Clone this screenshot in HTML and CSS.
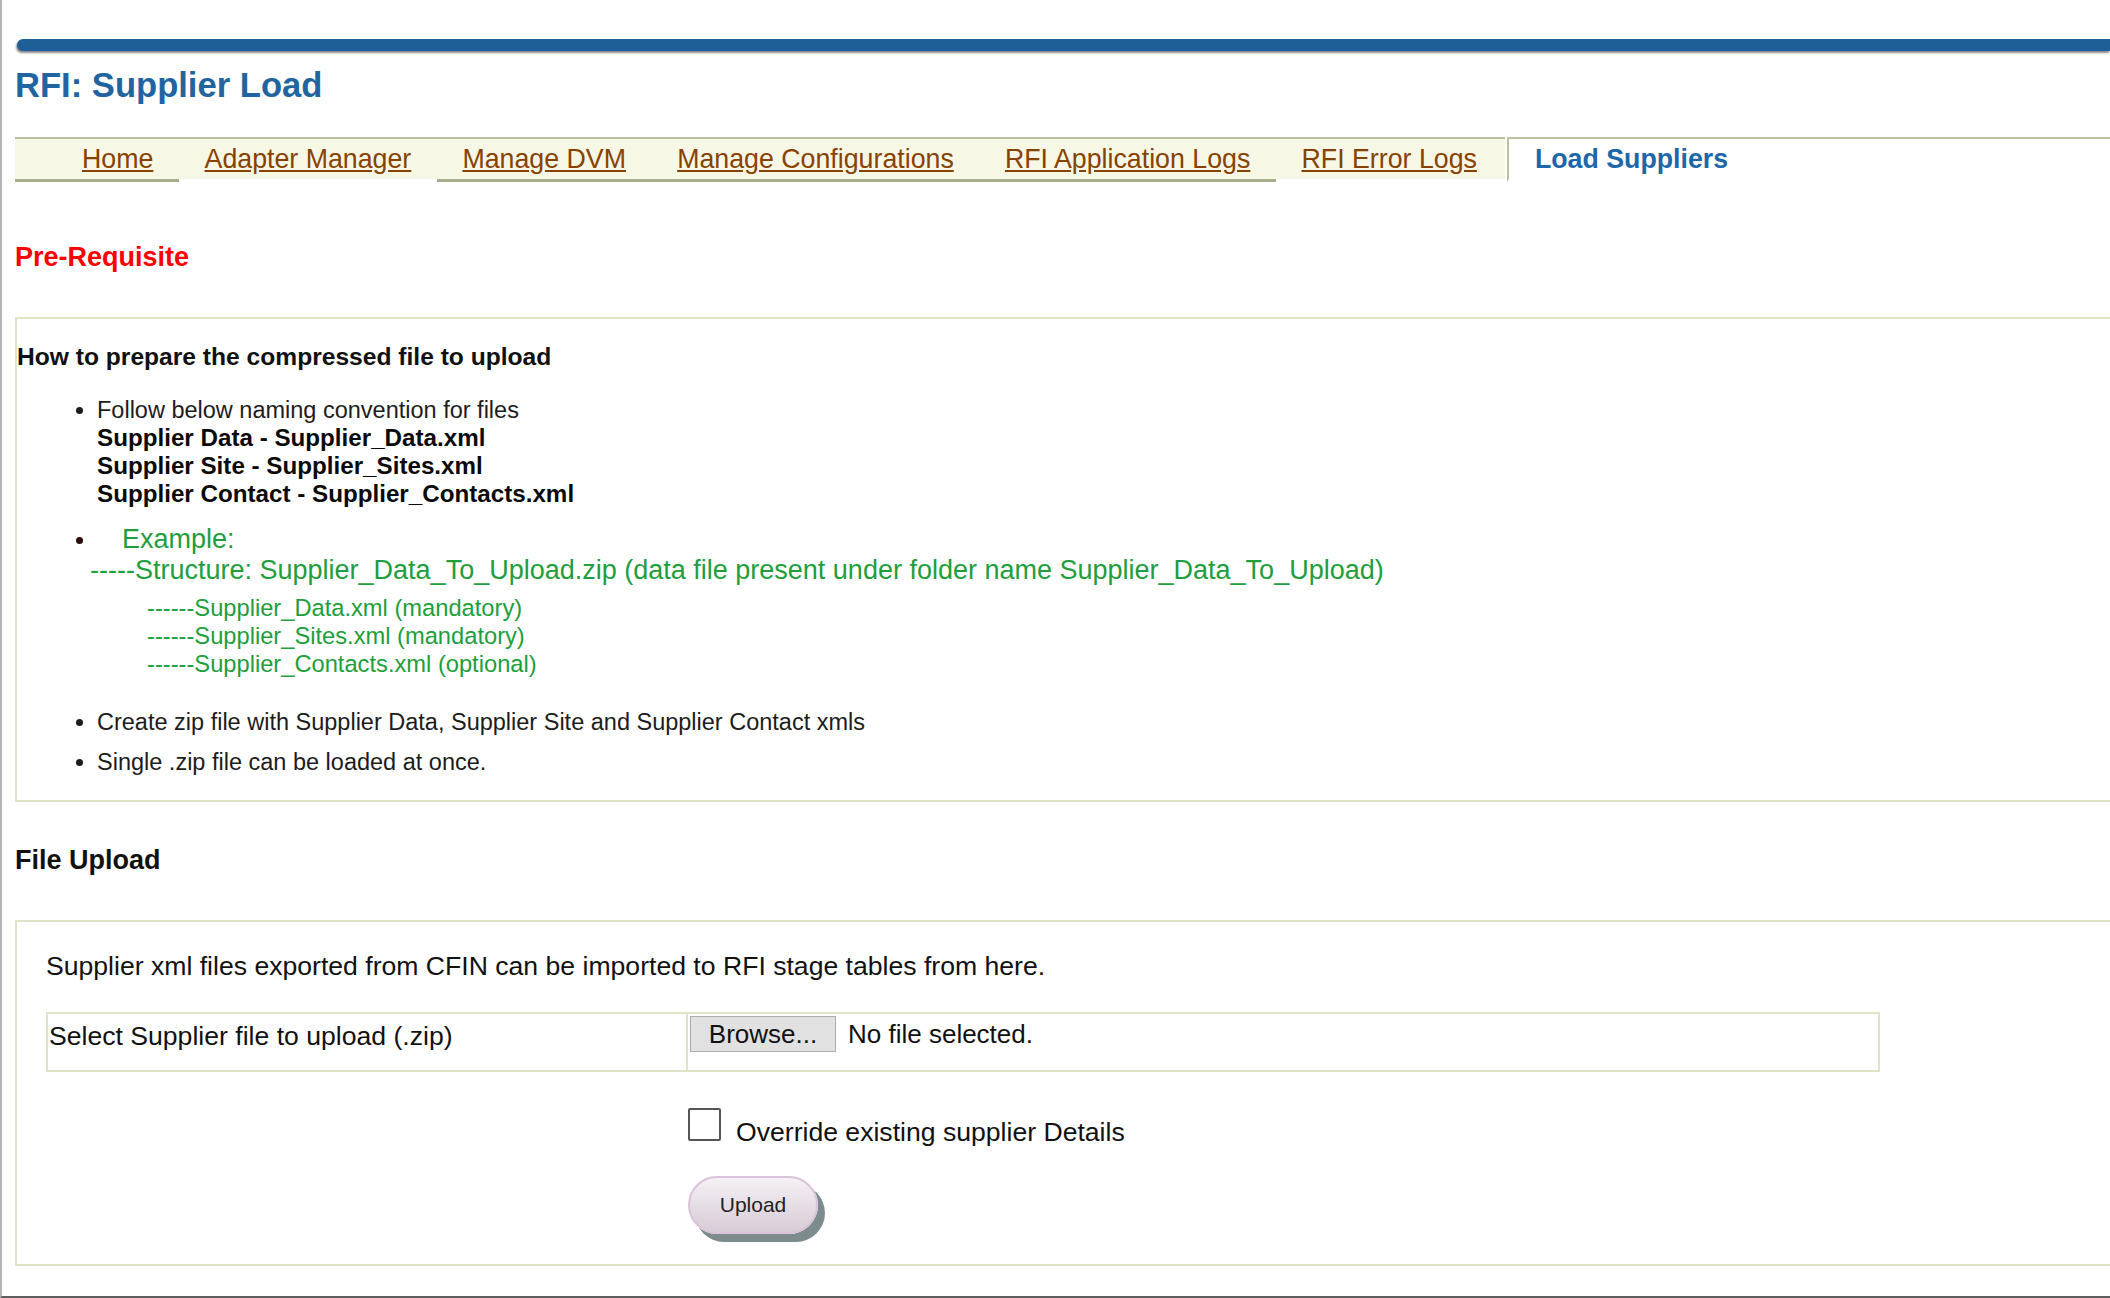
FILE: index.html
```html
<!DOCTYPE html>
<html lang="en">
<head>
    <meta charset="UTF-8">
    <title>RFI: Supplier Load</title>
    <link rel="stylesheet" href="styles.css">
</head>
<body>
<div class="page">

    <div class="topbar"></div>
    <h1 class="title">RFI: Supplier Load</h1>

    <div class="tabs">
        <a class="tab tab-first line" href="#">Home</a>
        <a class="tab" href="#">Adapter Manager</a>
        <a class="tab line" href="#">Manage DVM</a>
        <a class="tab line" href="#">Manage Configurations</a>
        <a class="tab line" href="#">RFI Application Logs</a>
        <a class="tab tab-last" href="#">RFI Error Logs</a>
        <span class="tab-active">Load Suppliers</span>
    </div>

    <h2 class="prereq">Pre-Requisite</h2>

    <div class="box info-box">
        <h3 class="info-head">How to prepare the compressed file to upload</h3>
        <ul class="steps">
            <li>
                Follow below naming convention for files<br>
                <b>Supplier Data - Supplier_Data.xml</b><br>
                <b>Supplier Site - Supplier_Sites.xml</b><br>
                <b>Supplier Contact - Supplier_Contacts.xml</b>
            </li>
            <li class="example">
                <span class="green example-label">Example:</span>
                <div class="green structure">-----Structure: Supplier_Data_To_Upload.zip (data file present under folder name Supplier_Data_To_Upload)</div>
                <div class="green files">
                    ------Supplier_Data.xml (mandatory)<br>
                    ------Supplier_Sites.xml (mandatory)<br>
                    ------Supplier_Contacts.xml (optional)
                </div>
            </li>
            <li class="gap">Create zip file with Supplier Data, Supplier Site and Supplier Contact xmls</li>
            <li class="gap-small">Single .zip file can be loaded at once.</li>
        </ul>
    </div>

    <h2 class="section-head">File Upload</h2>

    <div class="box upload-box">
        <p class="upload-note">Supplier xml files exported from CFIN can be imported to RFI stage tables from here.</p>

        <div class="file-row">
            <div class="file-label">Select Supplier file to upload (.zip)</div>
            <div class="file-input">
                <span class="browse-btn">Browse...</span>
                <span class="file-name">No file selected.</span>
            </div>
        </div>

        <div class="upload-opts">
            <div class="check-row">
                <span class="checkbox"></span>Override existing supplier Details
            </div>
            <button class="upload-btn">Upload</button>
        </div>
    </div>

</div>
</body>
</html>
```

FILE: styles.css
```css
body {
    margin: 0;
    font-family: "Liberation Sans", Arial, sans-serif;
    color: #111;
    background-color: #fff;
}
.page {
    height: 1298px;
    box-sizing: border-box;
    overflow: hidden;
    border-left: 2px solid #b4b4b4;
    border-bottom: 2px solid #5e5e5e;
    padding: 39px 0 0 13px;
}
.topbar {
    height: 12px;
    margin-left: 2px;
    background-color: #1f5f98;
    border-radius: 7px 0 0 7px;
    box-shadow: -1px 2px 2px #8a8a8a;
}
.title {
    margin: 14px 0 0 0;
    font-size: 34.6px;
    line-height: 40px;
    color: #21649f;
}

/* tab bar */
.tabs {
    display: flex;
    margin-top: 32px;
}
.tab {
    padding: 2px 25.6px 2px;
    line-height: 36px;
    font-size: 26.75px;
    color: #874200;
    text-decoration: underline;
    background-color: #f7f7e6;
    background-clip: padding-box;
    border-top: 2px solid #b9c1a2;
    border-bottom: 3px solid transparent;
}
.tab.line {
    border-bottom-color: #a6ae8a;
}
.tab-first {
    padding-left: 67px;
}
.tab-last {
    padding-right: 28px;
}
.tab-active {
    flex: 1;
    margin-left: 2px;
    padding: 2px 26px 2px;
    line-height: 36px;
    font-size: 26.75px;
    font-weight: bold;
    color: #1d67a8;
    border-top: 2px solid #b9c1a2;
    border-left: 2px solid #b9c1a2;
    border-bottom: 3px solid transparent;
}

.prereq {
    margin: 59px 0 0 0;
    font-size: 27px;
    line-height: 32px;
    color: #ff0000;
}
.section-head {
    margin: 42px 0 0 0;
    font-size: 27px;
    line-height: 32px;
    color: #111;
}

/* boxes */
.box {
    border: 2px solid #dfe4c9;
    border-right: none;
}
.info-box {
    margin-top: 44px;
    padding: 24px 0 24px 0;
}
.info-head {
    margin: 0;
    font-size: 24.6px;
    line-height: 28px;
}
.steps {
    margin: 25px 0 0 0;
    padding-left: 80px;
    font-size: 23.5px;
    line-height: 28px;
    color: #1c1c1c;
}
.steps b {
    font-size: 24.2px;
    color: #0a0a0a;
}
.green {
    color: #1e9e3c;
}
.example {
    margin-top: 16px;
    color: #2a0a0a;
}
.example-label {
    margin-left: 25px;
    font-size: 27px;
    line-height: 31px;
}
.structure {
    margin-left: -7px;
    font-size: 27px;
    line-height: 31px;
}
.files {
    margin: 8px 0 0 50px;
    font-size: 23.7px;
    line-height: 28px;
}
.gap {
    margin-top: 30px;
}
.gap-small {
    margin-top: 12px;
}

.upload-box {
    margin-top: 44px;
    padding: 28px 0 30px 29px;
}
.upload-note {
    margin: 0;
    font-size: 26.6px;
    line-height: 32px;
}
.file-row {
    display: grid;
    grid-template-columns: 640px 1fr;
    width: 1834px;
    height: 60px;
    box-sizing: border-box;
    margin-top: 30px;
    border: 2px solid #dfe4c9;
}
.file-label {
    padding: 6px 0 0 1px;
    font-size: 26.6px;
    line-height: 32px;
    border-right: 2px solid #dfe4c9;
}
.file-input {
    display: flex;
    align-items: center;
    align-self: start;
    padding: 2px 0 0 2px;
    font-size: 26px;
}
.browse-btn {
    width: 146px;
    height: 36px;
    box-sizing: border-box;
    line-height: 34px;
    text-align: center;
    background-color: #e1e1e1;
    border: 1px solid #acacac;
}
.file-name {
    margin-left: 12px;
}
.upload-opts {
    margin-left: 642px;
}
.check-row {
    margin-top: 36px;
    font-size: 26.6px;
    line-height: 32px;
}
.checkbox {
    display: inline-block;
    width: 33px;
    height: 33px;
    box-sizing: border-box;
    margin-right: 15px;
    border: 2px solid #555;
    border-radius: 2px;
    background-color: #fff;
}
.upload-btn {
    display: block;
    margin-top: 28px;
    width: 130px;
    height: 58px;
    border: 2px solid #dcc3db;
    border-radius: 29px;
    background: linear-gradient(#f5f1f5, #d8cbd5);
    box-shadow: 7px 8px 0 #7c8b8c;
    font-family: "Liberation Sans", Arial, sans-serif;
    font-size: 21px;
    color: #222;
}
```
